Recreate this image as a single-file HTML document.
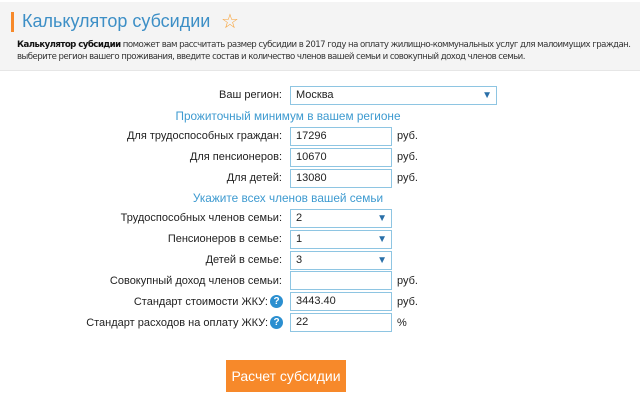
<!DOCTYPE html><html><head><meta charset="utf-8"><style>
body{margin:0;width:640px;height:404px;background:#fff;font-family:"Liberation Sans",sans-serif;position:relative;overflow:hidden}
.hd{position:absolute;left:0;top:2px;width:640px;height:68px;background:#f4f4f4;border-bottom:1px solid #e6e6e6}
.bar{position:absolute;left:11px;top:12px;width:3px;height:20px;background:#f7892a}
.t{position:absolute;left:22px;top:11px;font-size:18px;color:#3d8fc6}
.star{position:absolute;left:221px;top:9px;font-size:20px;color:#f7a33a}
.d{position:absolute;left:17px;top:40px;font-size:8.6px;line-height:11.5px;color:#333;white-space:nowrap;font-family:"DejaVu Sans",sans-serif;letter-spacing:-0.55px}
.l{position:absolute;right:358px;font-size:11px;color:#222;text-align:right;white-space:nowrap}
.l.h{right:372px}
.q{position:absolute;left:270px;width:13px;height:13px;border-radius:50%;background:#2b8fd0;color:#fff;font-size:10px;font-weight:bold;text-align:center;line-height:13px}
.i{position:absolute;left:290px;width:95px;height:17px;border:1px solid #8ec5e2;font-size:11px;line-height:17px;padding-left:5px;color:#222}
.i.w{width:200px}
.ar{position:absolute;right:4px;top:0;color:#2a6fa8;font-size:10px}
.r{position:absolute;left:397px;font-size:11px;color:#222}
.s{position:absolute;width:640px;left:-32px;text-align:center;font-size:11.8px;color:#3d9ad0}
.btn{position:absolute;left:226px;top:360px;width:120px;height:32px;background:#f7892a;color:#fff;font-size:14px;text-align:center;line-height:32px}
</style></head><body>
<div class="hd"></div><div class="bar"></div>
<div class="t">Калькулятор субсидии</div><div class="star">☆</div>
<div class="d"><b style="color:#111">Калькулятор субсидии</b> поможет вам рассчитать размер субсидии в 2017 году на оплату жилищно-коммунальных услуг для малоимущих граждан.<br>выберите регион вашего проживания, введите состав и количество членов вашей семьи и совокупный доход членов семьи.</div>

<div class="l" style="top:89px">Ваш регион:</div>
<div class="i w" style="top:86px">Москва<span class="ar">▼</span></div>
<div class="s" style="top:109px">Прожиточный минимум в вашем регионе</div>
<div class="l" style="top:130px">Для трудоспособных граждан:</div><div class="i" style="top:127px">17296</div><div class="r" style="top:130px">руб.</div>
<div class="l" style="top:151px">Для пенсионеров:</div><div class="i" style="top:148px">10670</div><div class="r" style="top:151px">руб.</div>
<div class="l" style="top:172px">Для детей:</div><div class="i" style="top:169px">13080</div><div class="r" style="top:172px">руб.</div>
<div class="s" style="top:191px">Укажите всех членов вашей семьи</div>
<div class="l" style="top:212px">Трудоспособных членов семьи:</div><div class="i" style="top:209px">2<span class="ar">▼</span></div>
<div class="l" style="top:233px">Пенсионеров в семье:</div><div class="i" style="top:230px">1<span class="ar">▼</span></div>
<div class="l" style="top:254px">Детей в семье:</div><div class="i" style="top:251px">3<span class="ar">▼</span></div>
<div class="l" style="top:275px">Совокупный доход членов семьи:</div><div class="i" style="top:271px"></div><div class="r" style="top:275px">руб.</div>
<div class="l h" style="top:296px">Стандарт стоимости ЖКУ:</div><div class="q" style="top:295px">?</div><div class="i" style="top:292px">3443.40</div><div class="r" style="top:296px">руб.</div>
<div class="l h" style="top:317px">Стандарт расходов на оплату ЖКУ:</div><div class="q" style="top:316px">?</div><div class="i" style="top:313px">22</div><div class="r" style="top:317px">%</div>
<div class="btn">Расчет субсидии</div>
</body></html>
